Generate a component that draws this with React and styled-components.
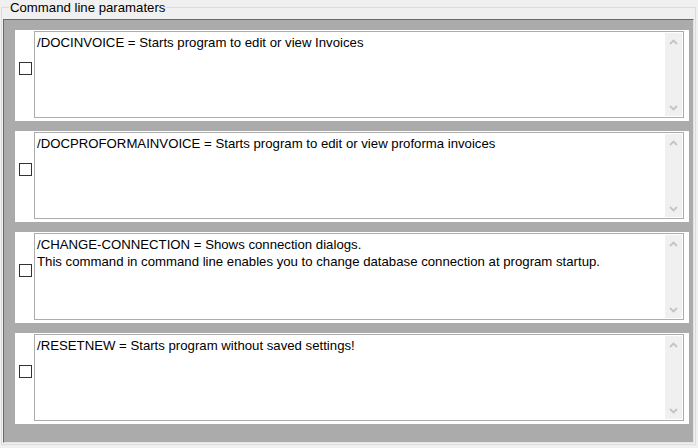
import React from 'react';
import styled, { createGlobalStyle } from 'styled-components';

const PARAMS = [
  { id: 'docinvoice', lines: ['/DOCINVOICE = Starts program to edit or view Invoices'] },
  { id: 'docproforma', lines: ['/DOCPROFORMAINVOICE = Starts program to edit or view proforma invoices'] },
  {
    id: 'changeconn',
    lines: [
      '/CHANGE-CONNECTION = Shows connection dialogs.',
      'This command in command line enables you to change database connection at program startup.',
    ],
  },
  { id: 'resetnew', lines: ['/RESETNEW = Starts program without saved settings!'] },
];

const GlobalStyle = createGlobalStyle`
  html, body {
    margin: 0;
    padding: 0;
    background: #f0f0f0;
    font-family: "Liberation Sans", Arial, sans-serif;
    font-size: 13.2px;
    color: #000000;
  }
`;

const App = () => {
  return (
    <>
      <GlobalStyle />
      <Group>
        <Caption>Command line paramaters</Caption>
        <ListPanel>
          {PARAMS.map(param => (
            <ParamRow key={param.id}>
              <CheckBox />
              <TextBox>
                <TextContent>
                  {param.lines.map((line, index) => (
                    <div key={index}>{line}</div>
                  ))}
                </TextContent>
                <ScrollBar>
                  <Chevron up />
                  <Chevron />
                </ScrollBar>
              </TextBox>
            </ParamRow>
          ))}
        </ListPanel>
      </Group>
    </>
  );
};

const Chevron = ({ up }) => (
  <ArrowBox>
    <svg width="9" height="6" viewBox="0 0 9 6">
      <polyline
        points={up ? '1,5 4.5,1.5 8,5' : '1,1 4.5,4.5 8,1'}
        fill="none"
        stroke="#c4c4c4"
        strokeWidth="1.8"
      />
    </svg>
  </ArrowBox>
);

const Group = styled.fieldset`
  margin: 0 2px 0 1px;
  padding: 4px 1px 1px 1px;
  border: 1px solid #dcdcdc;
  min-width: 0;
  height: 445px;
  box-sizing: border-box;
  display: flex;
  flex-direction: column;
`;

const Caption = styled.legend`
  padding: 0 1px;
  margin-left: 6px;
  line-height: 15px;
`;

const ListPanel = styled.div`
  flex: 1;
  background: #ababab;
  border-style: solid;
  border-width: 1px;
  border-color: #696969 #e3e3e3 #e3e3e3 #696969;
  padding: 10px 4px 0 11px;
  display: flex;
  flex-direction: column;
  gap: 10px;
`;

const ParamRow = styled.div`
  display: flex;
  align-items: flex-start;
  height: 91px;
  background: #ffffff;
`;

const CheckBox = styled.div`
  width: 13px;
  height: 13px;
  box-sizing: border-box;
  border: 1px solid #333333;
  background: #ffffff;
  margin: 32px 2px 0 4px;
  flex-shrink: 0;
`;

const TextBox = styled.div`
  margin-top: 1px;
  width: 650px;
  height: 87px;
  box-sizing: border-box;
  border: 1px solid #acacac;
  padding: 1px;
  display: flex;
  background: #ffffff;
`;

const TextContent = styled.div`
  flex: 1;
  padding: 1px 0 0 1px;
  line-height: 17px;
  white-space: nowrap;
  overflow: hidden;
`;

const ScrollBar = styled.div`
  width: 17px;
  background: #f0f0f0;
  display: flex;
  flex-direction: column;
  justify-content: space-between;
`;

const ArrowBox = styled.div`
  height: 17px;
  display: flex;
  align-items: center;
  justify-content: center;
`;

export default App;
